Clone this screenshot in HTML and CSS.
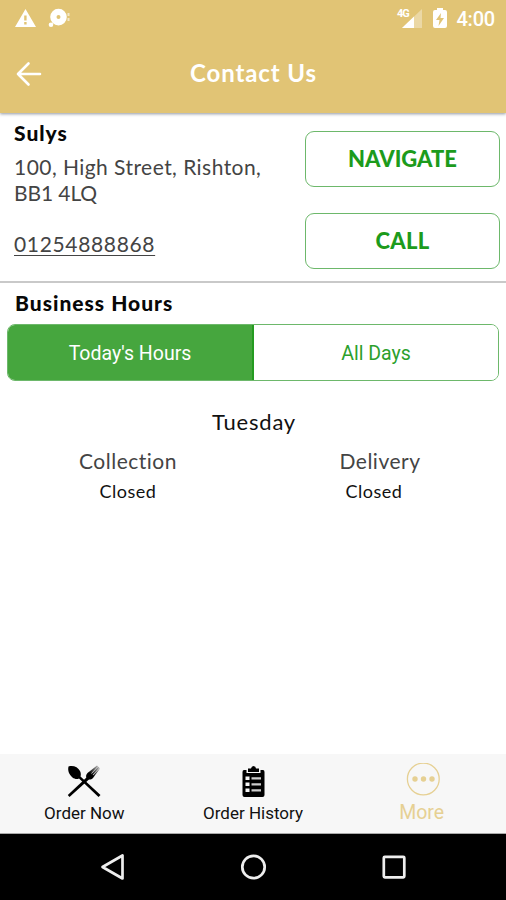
FILE: index.html
```
<!DOCTYPE html>
<html lang="en">

<head>
    <meta charset="UTF-8">
    <meta name="viewport" content="width=device-width, initial-scale=1.0">
    <title>Contact Us</title>
    <link rel="stylesheet" href="styles.css">
</head>

<body>
    <header class="header">
        <div class="status-bar">
            <svg class="status-left" width="60" height="24" viewBox="0 0 60 24" fill="#fff">
                <path fill-rule="evenodd" d="M11.5 1 22 19H1zM10.2 7.5v5h2.4v-5zM10.2 14v2.4h2.4V14z"/>
                <path fill-rule="evenodd" d="M44.500 .8a8.300 8.300 0 1 1 0 16.600a8.300 8.300 0 1 1 0-16.600zM44.500 7a2 2 0 1 0 0 4a2 2 0 1 0 0-4z"/>
                <circle cx="37" cy="16.700" r="2.300"/>
                <path d="M53.500 5h2v3h-2zM53.500 10h2v3h-2z" opacity=".6"/>
            </svg>
            <div class="status-right">
                <svg width="54" height="24" viewBox="0 0 54 24" fill="#fff">
                    <path d="M26 1v19H6z" opacity=".35"/>
                    <path d="M18 8.500V20H6z"/>
                    <text class="network" x="1" y="9">4G</text>
                    <path fill-rule="evenodd" d="M41 0h6v2h2q2 0 2 2v14q0 2-2 2H39q-2 0-2-2V4q0-2 2-2h2zM45 5l-5 7h3.500l-1 6 5.500-8h-3.500z"/>
                </svg>
                <span class="time">4:00</span>
            </div>
        </div>
        <div class="title-bar">
            <svg class="back" width="28" height="26" viewBox="0 0 28 26" fill="none" stroke="#fff" stroke-width="2.600" stroke-linecap="round" stroke-linejoin="round">
                <path d="M13.500 2.500 3 13l10.500 10.500M3 13h22"/>
            </svg>
            <h1 class="title">Contact Us</h1>
        </div>
    </header>

    <main class="content">
        <section class="contact">
            <div class="details">
                <h2 class="name">Sulys</h2>
                <p class="address">100, High Street, Rishton,<br><span class="postcode">BB1 4LQ</span></p>
                <a class="phone" href="tel:01254888868">01254888868</a>
            </div>
            <div class="actions">
                <button class="button navigate">NAVIGATE</button>
                <button class="button call">CALL</button>
            </div>
        </section>

        <section class="hours">
            <h2 class="hours-title">Business Hours</h2>
            <div class="tabs">
                <button class="tab active">Today's Hours</button>
                <button class="tab">All Days</button>
            </div>
            <p class="day">Tuesday</p>
            <div class="times">
                <div class="time-col">
                    <p class="type">Collection</p>
                    <p class="state">Closed</p>
                </div>
                <div class="time-col">
                    <p class="type delivery">Delivery</p>
                    <p class="state">Closed</p>
                </div>
            </div>
        </section>
    </main>

    <nav class="tab-bar">
        <a class="nav-item" href="#">
            <svg width="36" height="36" viewBox="0 0 36 36">
                <defs>
                    <linearGradient id="fork" x1="0" y1="1" x2="1" y2="0">
                        <stop offset=".35" stop-color="#000"/>
                        <stop offset="1" stop-color="#000" stop-opacity=".2"/>
                    </linearGradient>
                </defs>
                <path d="M2.500 3.500C7 2 12 4 14 8c1 2 1 4 .5 5.500l20 18.500-2 2L13 15.500c-2 1-4.500.5-6.500-1C3 11.500 1.500 7.500 2.500 3.500z"/>
                <path d="M3.500 34 1.800 32 21 14l2.500 2z"/>
                <path fill="url(#fork)" d="M21.500 10 31 2.500l3 3L27 15c-2 2-4.500 2-6 .5-1.500-1.500-1.200-3.500.5-5.500z"/>
                <path fill="none" stroke="#f7f7f7" stroke-width=".7" d="M25.500 10.500 32 3.500M27 12l6.500-7"/>
            </svg>
            <span class="label">Order Now</span>
        </a>
        <a class="nav-item" href="#">
            <svg width="36" height="36" viewBox="0 0 36 36">
                <path d="M9 7h2.500v3h14V7H28q1.500 0 1.500 2v23q0 2-2 2h-18q-2 0-2-2V9q0-2 1.500-2z"/>
                <path d="M13 5.500h3Q16.500 3 18.500 3T21 5.500h3V9H13z"/>
                <path fill="#f7f7f7" d="M10.500 13.500h4V17h-4zM10.500 19.500h4V23h-4zM10.500 25.500h4V29h-4z"/>
                <path stroke="#ccc" stroke-width="2.200" d="M16.500 15.300H26M16.500 21.300H26M16.500 27.300H26"/>
            </svg>
            <span class="label">Order History</span>
        </a>
        <a class="nav-item more" href="#">
            <svg width="36" height="36" viewBox="0 0 36 36" fill="#e6d093">
                <circle cx="19.300" cy="16" r="15.900" fill="none" stroke="#e6d093" stroke-width="1.300"/>
                <circle cx="11" cy="16" r="2.700"/>
                <circle cx="19.500" cy="16" r="2.700"/>
                <circle cx="28" cy="16" r="2.700"/>
            </svg>
            <span class="label">More</span>
        </a>
    </nav>

    <footer class="system-nav">
        <svg width="30" height="30" viewBox="0 0 30 30"><path d="M25.500 3.500v23L5.500 15z"/></svg>
        <svg width="30" height="30" viewBox="0 0 30 30"><circle cx="15.500" cy="15" r="11.200"/></svg>
        <svg width="30" height="30" viewBox="0 0 30 30"><rect x="4.800" y="4.800" width="20.500" height="20.500" rx="1"/></svg>
    </footer>
</body>

</html>
```
FILE: styles.css
```
* {
    box-sizing: border-box;
}

body {
    font-family: Lato, "Liberation Sans", sans-serif;
    font-variant-ligatures: none;
    background-color: #fff;
    color: #111;
    margin: 0;
    display: flex;
    flex-direction: column;
    height: 900px;
    overflow: hidden;
}

h1, h2, p {
    margin: 0;
}

svg {
    display: block;
    flex: none;
}

.header {
    height: 113px;
    background-color: #e1c475;
    color: #fff;
    box-shadow: 0 1px 3px rgba(70, 80, 100, 0.6);
}

.status-bar {
    display: flex;
    justify-content: space-between;
    height: 38px;
    padding: 8px 11px 0 14px;
}

.status-right {
    display: flex;
    gap: 6px;
}

.network {
    font: bold 11px Roboto, sans-serif;
    letter-spacing: -1px;
}

.time {
    font: 500 20px/22px Roboto, sans-serif;
    letter-spacing: -0.2px;
}

.title-bar {
    display: grid;
    grid-template-columns: 28px 1fr 28px;
    align-items: center;
    height: 72px;
    padding: 0 14px 0 15px;
}

.title {
    font-size: 24px;
    line-height: 28px;
    font-weight: bold;
    text-align: center;
    letter-spacing: 0.9px;
    padding-bottom: 2px;
}

.content {
    flex: 1;
}

.contact {
    display: flex;
    justify-content: space-between;
    height: 170px;
    padding: 7px 6px 0 14px;
    border-bottom: 2px solid #c9c9c9;
}

.name, .hours-title {
    font-size: 21px;
    line-height: 25px;
    font-weight: 900;
    letter-spacing: 1px;
    color: #080808;
}

.address {
    margin-top: 9px;
    font-size: 21px;
    line-height: 26px;
    letter-spacing: 0.45px;
    color: #444;
    white-space: nowrap;
}

.postcode {
    letter-spacing: -0.1px;
}

.phone {
    display: inline-block;
    margin-top: 25px;
    font-size: 21px;
    line-height: 25px;
    letter-spacing: 0.65px;
    color: #444;
    text-decoration: underline;
    text-decoration-thickness: 1px;
    text-underline-offset: 3px;
}

.actions {
    display: flex;
    flex-direction: column;
    gap: 26px;
    padding-top: 11px;
}

.button {
    width: 195px;
    height: 56px;
    padding: 0 0 1px;
    background-color: #fff;
    border: 1px solid #6db86b;
    border-radius: 9px;
    font: 900 22px Lato, sans-serif;
    color: #1c9b1c;
}

.call {
    letter-spacing: 0.3px;
}

.hours {
    padding: 7px 7px 0;
}

.hours-title {
    padding-left: 8px;
}

.tabs {
    display: flex;
    height: 57px;
    margin-top: 9px;
    border: 1px solid #6db86b;
    border-radius: 8px;
    overflow: hidden;
}

.tab {
    flex: 1;
    padding: 2px 0 0;
    background-color: #fff;
    border: none;
    font: 19.5px Roboto, sans-serif;
    color: #2ca02c;
}

.tab.active {
    background-color: #46a63e;
    border-right: 2px solid #259b20;
    color: #fff;
}

.day {
    margin-top: 28px;
    padding-left: 2px;
    font-size: 22px;
    line-height: 26px;
    letter-spacing: 0.8px;
    text-align: center;
}

.times {
    display: flex;
    margin-top: 13px;
}

.time-col {
    flex: 1;
    padding-right: 4px;
    text-align: center;
}

.type {
    font-size: 21px;
    line-height: 26px;
    letter-spacing: 0.5px;
    color: #444;
}

.delivery {
    padding-left: 12px;
}

.state {
    margin-top: 5px;
    font-size: 18px;
    line-height: 24px;
    letter-spacing: 0.5px;
}

.tab-bar {
    display: flex;
    height: 80px;
    background-color: #f7f7f7;
    border-bottom: 1px solid #aaa;
}

.nav-item {
    flex: 1;
    display: flex;
    flex-direction: column;
    align-items: center;
    padding-top: 9px;
    font: 17px/22px Roboto, sans-serif;
    color: #111;
    text-decoration: none;
}

.label {
    margin-top: 3px;
}

.more {
    font-size: 19.5px;
    color: #e6d093;
}

.system-nav {
    display: flex;
    justify-content: center;
    gap: 111px;
    height: 66px;
    padding-top: 18px;
    background-color: #000;
}

.system-nav svg {
    fill: none;
    stroke: #eee;
    stroke-width: 2.7;
    stroke-linejoin: round;
}
```
